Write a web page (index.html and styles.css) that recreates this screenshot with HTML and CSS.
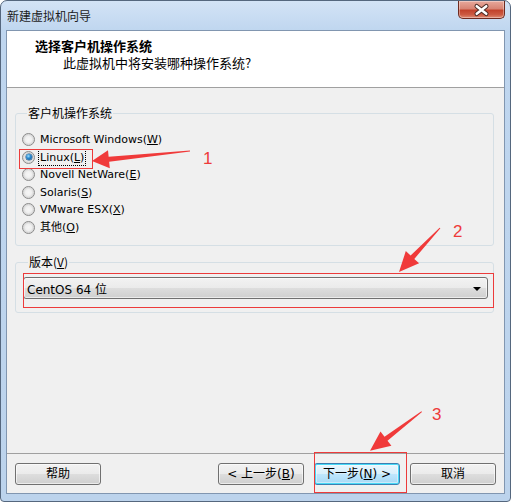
FILE: index.html
```html
<!DOCTYPE html>
<html lang="zh-CN">
<head>
<meta charset="utf-8">
<title>新建虚拟机向导</title>
<link rel="stylesheet" href="styles.css">
</head>
<body>
<div class="window">
  <div class="titlebar">
    <span class="title">新建虚拟机向导</span>
    <button class="close" aria-label="关闭">
      <svg width="47" height="18" viewBox="0 0 47 18">
        <path d="M18.5 5 L28.5 13 M28.5 5 L18.5 13" stroke="#4a2a24" stroke-width="4.6" stroke-linecap="round"/>
        <path d="M18.5 5 L28.5 13 M28.5 5 L18.5 13" stroke="#ffffff" stroke-width="2.6" stroke-linecap="round"/>
      </svg>
    </button>
  </div>
  <div class="client">
    <div class="header">
      <div class="h-title">选择客户机操作系统</div>
      <div class="h-sub">此虚拟机中将安装哪种操作系统?</div>
    </div>
    <div class="body">
      <fieldset class="group group-os">
        <legend>客户机操作系统</legend>
        <div class="radio"><span class="dot"></span><span class="lbl">Microsoft Windows(<u>W</u>)</span></div>
        <div class="radio"><span class="dot on"></span><span class="lbl focus">Linux(<u>L</u>)</span></div>
        <div class="radio"><span class="dot"></span><span class="lbl">Novell NetWare(<u>E</u>)</span></div>
        <div class="radio"><span class="dot"></span><span class="lbl">Solaris(<u>S</u>)</span></div>
        <div class="radio"><span class="dot"></span><span class="lbl">VMware ESX(<u>X</u>)</span></div>
        <div class="radio"><span class="dot"></span><span class="lbl">其他(<u>O</u>)</span></div>
      </fieldset>
      <fieldset class="group group-ver">
        <legend>版本(<u>V</u>)</legend>
        <div class="combo"><span>CentOS 64 位</span><span class="caret"></span></div>
      </fieldset>
    </div>
    <div class="buttons">
      <button class="btn">帮助</button>
      <span class="grow"></span>
      <button class="btn">&lt; 上一步(<u>B</u>)</button>
      <button class="btn default">下一步(<u>N</u>) &gt;</button>
      <button class="btn">取消</button>
    </div>
  </div>

  <div class="mark mark1"></div>
  <div class="mark mark2"></div>
  <div class="mark mark3"></div>
  <span class="num num1">1</span>
  <span class="num num2">2</span>
  <span class="num num3">3</span>
  <svg class="arrows" width="515" height="503" viewBox="0 0 515 503">
    <polygon fill="#f03a3a" points="92,161 108,150.3 108.65,156.8 190,150.5 190,151.5 109.15,161.8 109.8,168.2"/>
    <polygon fill="#f03a3a" points="399,272 405.8,251.1 410.6,255.5 439.6,227.7 440.4,228.3 414.3,258.9 419.1,263.3"/>
    <polygon fill="#f03a3a" points="370,450.7 380.5,431.5 384.5,436.7 421.4,411.3 422,412.1 387.5,440.7 391.4,445.8"/>
  </svg>
</div>
</body>
</html>
```
FILE: styles.css
```css
* { box-sizing: border-box; }
html, body { margin: 0; padding: 0; background: #ffffff; }
body {
  font-family: "DejaVu Sans", "Noto Sans CJK SC", sans-serif;
  font-size: 12px;
  color: #000;
  width: 515px;
  height: 503px;
  overflow: hidden;
}
u { text-decoration: underline; text-underline-offset: 1px; }

.window {
  position: relative;
  width: 511px;
  height: 502px;
  border: 1px solid #55677e;
  border-radius: 7px 7px 4px 4px;
  background: linear-gradient(180deg, #d3e3f6 0px, #bfd6ef 30px, #bcd3ec 100%);
  padding: 0 5px 7px 5px;
  display: flex;
  flex-direction: column;
}

.titlebar {
  height: 29px;
  display: flex;
  align-items: center;
  padding-left: 1px;
}
.title {
  font-family: "Noto Sans CJK SC", sans-serif;
  font-size: 12px;
  color: #1b1b1b;
  margin-top: -1px;
}
.close {
  margin-left: auto;
  align-self: flex-start;
  width: 47px;
  height: 18px;
  padding: 0;
  border: 1px solid #6e2a20;
  border-top: none;
  border-radius: 0 0 5px 5px;
  background: linear-gradient(180deg, #e8a99c 0%, #d88474 45%, #c2432c 55%, #cc5a42 80%, #df8c74 100%);
  box-shadow: inset 0 0 0 1px rgba(255,255,255,0.35);
  display: flex;
  align-items: center;
  justify-content: center;
}
.close svg { display: block; }

.client {
  flex: 1;
  border: 1px solid #8196b0;
  background: #f0f0f0;
  display: flex;
  flex-direction: column;
}

.header {
  height: 57px;
  background: #ffffff;
  border-bottom: 1px solid #a0a0a0;
  padding: 7px 0 0 28px;
  font-family: "Noto Sans CJK SC", sans-serif;
}
.h-title {
  font-size: 13px;
  font-weight: bold;
  line-height: 16px;
}
.h-sub {
  font-size: 13px;
  line-height: 16px;
  margin-top: 1px;
  padding-left: 28px;
}

.body {
  flex: 1;
  padding: 0 10px 0 8px;
  display: flex;
  flex-direction: column;
}

.group {
  margin: 0;
  border: 1px solid #d5dfe5;
  border-radius: 3px;
  min-width: 0;
}
.group legend {
  font-family: "Noto Sans CJK SC", sans-serif;
  font-size: 12px;
  line-height: 16px;
  padding: 0 1px;
  margin-left: 5px;
}
.group-os {
  margin-top: 17px;
  padding: 10px 0 9px 6px;
}
.group-ver {
  margin-top: 8px;
  padding: 7px 5px 13px 7px;
}

.radio {
  height: 17.5px;
  display: flex;
  align-items: center;
  font-size: 11px;
}
.dot {
  width: 13px;
  height: 13px;
  border-radius: 50%;
  border: 1px solid #8a8a8a;
  background: radial-gradient(circle at 50% 50%, #f6f6f6 0, #f0f0f0 3px, #d9d9d9 5px, #ececec 6px);
  margin-right: 3px;
  flex: none;
  position: relative;
}
.dot.on::after {
  content: "";
  position: absolute;
  left: 2.5px;
  top: 2.5px;
  width: 6px;
  height: 6px;
  border-radius: 50%;
  background: radial-gradient(circle at 40% 35%, #9fe0ff 0, #2b8ad0 40%, #0c4f8c 100%);
  box-shadow: 0 0 0 0.5px #1d4f7a;
}
.lbl {
  padding: 0 1px;
  line-height: 15px;
  border: 1px solid transparent;
}
.lbl.focus { border: 1px dotted #000; }

.combo {
  height: 22px;
  border: 1px solid #707070;
  border-radius: 3px;
  background: linear-gradient(180deg, #f2f2f2 0%, #ebebeb 48%, #dddddd 52%, #cfcfcf 100%);
  box-shadow: inset 0 0 0 1px rgba(255,255,255,0.6);
  display: flex;
  align-items: center;
  justify-content: space-between;
  padding: 0 6px 0 3px;
  font-size: 12px;
}
.caret {
  width: 0;
  height: 0;
  border-left: 4px solid transparent;
  border-right: 4px solid transparent;
  border-top: 4px solid #000;
  margin-top: 1px;
}

.buttons {
  border-top: 1px solid #a0a0a0;
  padding: 9px 8px 8px 8px;
  display: flex;
  gap: 10px;
}
.grow { flex: 1; }
.btn {
  width: 86px;
  height: 22px;
  padding: 0;
  border: 1px solid #707070;
  border-radius: 3px;
  background: linear-gradient(180deg, #f2f2f2 0%, #ebebeb 48%, #dddddd 52%, #cfcfcf 100%);
  box-shadow: inset 0 0 0 1px rgba(255,255,255,0.6);
  font-family: "DejaVu Sans", "Noto Sans CJK SC", sans-serif;
  font-size: 12px;
  color: #000;
  line-height: 20px;
}
.btn.default {
  border-color: #3c7fb1;
  box-shadow: inset 0 0 0 1px #48d9f7, inset 0 0 0 2px rgba(255,255,255,0.4);
  background: linear-gradient(180deg, #eaf6fd 0%, #d9f0fc 48%, #bee6fd 52%, #a7d9f5 100%);
}

.mark {
  position: absolute;
  border: 1px solid #ec3b3b;
  pointer-events: none;
}
.mark1 { left: 18px; top: 148px; width: 74px; height: 20px; }
.mark2 { left: 22px; top: 272px; width: 471px; height: 35px; }
.mark3 { left: 313px; top: 451px; width: 93px; height: 41px; }

.num {
  position: absolute;
  font-family: "Liberation Sans", sans-serif;
  font-size: 17px;
  line-height: 17px;
  color: #ee3a3a;
}
.num1 { left: 202px; top: 149px; }
.num2 { left: 452px; top: 222px; }
.num3 { left: 431px; top: 405px; }

.arrows {
  position: absolute;
  left: -1px;
  top: -1px;
  pointer-events: none;
}
```
